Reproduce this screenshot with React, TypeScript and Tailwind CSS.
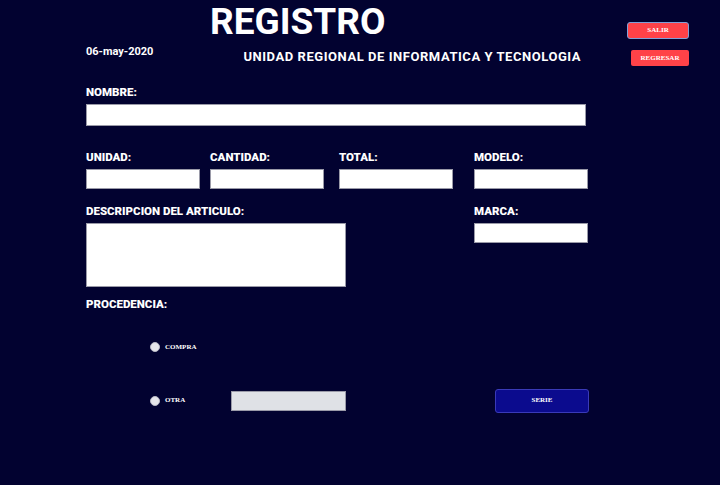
import React from 'react';

const label = "block font-['Roboto',sans-serif] font-black text-[11.5px] leading-[12px] text-white";
const box = "block h-[20px] w-[114px] bg-white border border-[#9a9aa8]";

const Field: React.FC<{ title: string; className?: string }> = ({ title, className }) => (
  <div className={className}>
    <span className={label}>{title}</span>
    <div className={`${box} mt-[6px]`} />
  </div>
);

const Radio: React.FC<{ text: string }> = ({ text }) => (
  <div className="flex items-center gap-[5px]">
    <span className="h-[10px] w-[10px] rounded-full bg-[#e6e6ea] border border-[#b8b8c4]" />
    <span className="font-['Liberation_Serif',serif] font-bold text-[7px] text-white">{text}</span>
  </div>
);

const App: React.FC = () => {
  return (
    <div className="flex h-[485px] w-[720px] bg-[#020230] text-white">
      <main className="w-[620px] pl-[86px]">
        <h1 className="ml-[124px] pt-[2px] font-['Roboto',sans-serif] font-bold text-[37px] leading-[40px]">
          REGISTRO
        </h1>
        <div className="mt-[4px] flex items-start">
          <span className="font-['Roboto',sans-serif] font-bold text-[11px] leading-[12px]">06-may-2020</span>
          <span className="ml-[90px] mt-[4px] font-['Roboto',sans-serif] font-bold text-[13px] leading-[14px] tracking-[0.55px]">
            UNIDAD REGIONAL DE INFORMATICA Y TECNOLOGIA
          </span>
        </div>

        <div className="mt-[22px]">
          <span className={label}>NOMBRE:</span>
          <div className="mt-[6px] h-[22px] w-[500px] bg-white border border-[#9a9aa8]" />
        </div>

        <div className="mt-[25px] flex">
          <Field title="UNIDAD:" />
          <Field title="CANTIDAD:" className="ml-[10px]" />
          <Field title="TOTAL:" className="ml-[15px]" />
          <Field title="MODELO:" className="ml-[21px]" />
        </div>

        <div className="mt-[16px] flex">
          <div>
            <span className={label}>DESCRIPCION DEL ARTICULO:</span>
            <div className="mt-[6px] h-[64px] w-[260px] bg-white border border-[#9a9aa8]" />
          </div>
          <Field title="MARCA:" className="ml-[128px]" />
        </div>

        <span className={`${label} mt-[11px]`}>PROCEDENCIA:</span>

        <div className="ml-[64px] mt-[32px]">
          <Radio text="COMPRA" />
        </div>
        <div className="mt-[36px] flex items-center">
          <div className="ml-[64px] w-[81px]">
            <Radio text="OTRA" />
          </div>
          <div className="h-[20px] w-[115px] bg-[#dfe1e6] border border-[#9a9aa8]" />
          <button className="ml-[149px] h-[24px] w-[94px] rounded-[3px] bg-[#0b0b8e] border border-[#3a3ab8] font-['Liberation_Serif',serif] font-bold text-[7px] text-white">
            SERIE
          </button>
        </div>
      </main>

      <aside className="flex flex-col items-end pt-[22px] pr-[31px] w-[100px]">
        <button className="h-[17px] w-[62px] rounded-[3px] bg-[#ff4248] border border-[#7fa0d8] font-['Liberation_Serif',serif] font-bold text-[7px] text-white">
          SALIR
        </button>
        <button className="mt-[11px] h-[16px] w-[58px] rounded-[2px] bg-[#ff4248] font-['Liberation_Serif',serif] font-bold text-[7px] text-white">
          REGRESAR
        </button>
      </aside>
    </div>
  );
};

export default App;
